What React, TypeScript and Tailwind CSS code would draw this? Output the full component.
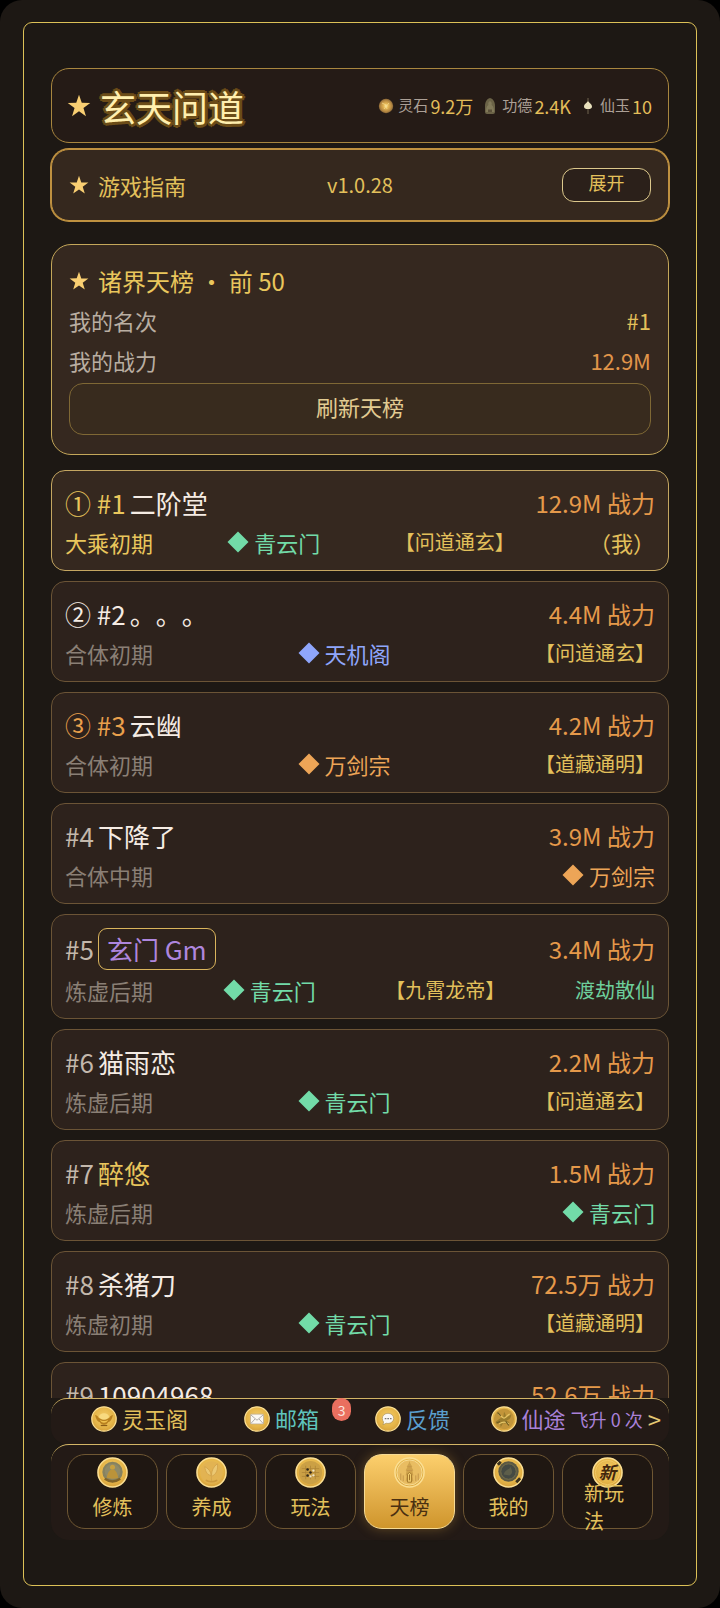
import type { ReactNode } from "react";

type Sect = { name: string; tone: string };
type Player = {
  rank: number;
  badge?: string;
  rankTone: string;
  name: string;
  nameTone: string;
  framed?: boolean;
  power: string;
  realm: string;
  sect: Sect;
  title?: string;
  extra?: string;
  mine?: boolean;
};

const QINGYUN: Sect = { name: "青云门", tone: "text-[#72dba8]" };
const TIANJI: Sect = { name: "天机阁", tone: "text-[#8fa6fb]" };
const WANJIAN: Sect = { name: "万剑宗", tone: "text-[#eda557]" };

const GOLD = "text-[#e9c65c]";
const PALE = "text-[#f5ece4]";
const GREY = "text-[#c3b8ac]";

const players: Player[] = [
  { rank: 1, badge: "①", rankTone: GOLD, name: "二阶堂", nameTone: PALE, power: "12.9M", realm: "大乘初期", sect: QINGYUN, title: "【问道通玄】", extra: "（我）", mine: true },
  { rank: 2, badge: "②", rankTone: PALE, name: "。。。", nameTone: PALE, power: "4.4M", realm: "合体初期", sect: TIANJI, title: "【问道通玄】" },
  { rank: 3, badge: "③", rankTone: "text-[#e9a04c]", name: "云幽", nameTone: PALE, power: "4.2M", realm: "合体初期", sect: WANJIAN, title: "【道藏通明】" },
  { rank: 4, rankTone: GREY, name: "下降了", nameTone: PALE, power: "3.9M", realm: "合体中期", sect: WANJIAN },
  { rank: 5, rankTone: GREY, name: "玄门 Gm", nameTone: "text-[#ae86de]", framed: true, power: "3.4M", realm: "炼虚后期", sect: QINGYUN, title: "【九霄龙帝】", extra: "渡劫散仙" },
  { rank: 6, rankTone: GREY, name: "猫雨恋", nameTone: PALE, power: "2.2M", realm: "炼虚后期", sect: QINGYUN, title: "【问道通玄】" },
  { rank: 7, rankTone: GREY, name: "醉悠", nameTone: GOLD, power: "1.5M", realm: "炼虚后期", sect: QINGYUN },
  { rank: 8, rankTone: GREY, name: "杀猪刀", nameTone: PALE, power: "72.5万", realm: "炼虚初期", sect: QINGYUN, title: "【道藏通明】" },
  { rank: 9, rankTone: GREY, name: "10904968", nameTone: PALE, power: "52.6万", realm: "炼虚初期", sect: QINGYUN },
];

function Star({ className }: { className: string }) {
  return (
    <svg viewBox="0 0 24 24" className={className} aria-hidden="true">
      <path d="M12 .8l2.75 8.05 8.5.1-6.8 5.1 2.5 8.15L12 17.3l-6.95 4.9 2.5-8.15-6.8-5.1 8.5-.1z" fill="#f9cf72" />
    </svg>
  );
}

function Diamond() {
  return (
    <svg viewBox="0 0 22 22" className="size-[22px] shrink-0" aria-hidden="true">
      <path d="M11 .5L21.5 11 11 21.5.5 11z" fill="currentColor" />
    </svg>
  );
}

function Defs() {
  return (
    <svg className="absolute size-0" aria-hidden="true">
      <defs>
        <radialGradient id="coin" cx="50%" cy="42%" r="58%">
          <stop offset="0" stopColor="#f3cc69" />
          <stop offset="0.7" stopColor="#e5b548" />
          <stop offset="1" stopColor="#d6a03a" />
        </radialGradient>
        <radialGradient id="stone" cx="50%" cy="50%" r="50%">
          <stop offset="0" stopColor="#fff0b0" />
          <stop offset="0.3" stopColor="#e8b955" />
          <stop offset="0.75" stopColor="#b88a42" />
          <stop offset="1" stopColor="#8a6738" />
        </radialGradient>
      </defs>
    </svg>
  );
}

function Coin({ className, children }: { className: string; children: ReactNode }) {
  return (
    <svg viewBox="0 0 32 32" className={className} aria-hidden="true">
      <circle cx="16" cy="16" r="15" fill="url(#coin)" stroke="#fbdf93" strokeWidth="1.6" />
      {children}
    </svg>
  );
}

const ingot = (
  <>
    <path d="M5 11c3 0 4 3 5 4h12c1-1 2-4 5-4-1 5-3 8-6 9-1 4-9 4-10 0-3-1-5-4-6-9z" fill="#b8801f" />
    <ellipse cx="16" cy="13" rx="6" ry="4" fill="#f8da80" />
    <path d="M11 17c2 2 8 2 10 0-1 5-9 5-10 0z" fill="#efc04c" />
    <path d="M12 24h8" stroke="#8a5c18" strokeWidth="1.5" />
  </>
);

const envelope = (
  <>
    <rect x="8" y="10" width="16" height="12" rx="1" fill="#fbf8f2" stroke="#b3a694" strokeWidth=".8" />
    <path d="M8.500 11l7.500 6.500L23.500 11M8.500 21.500l5-5.500M23.500 21.500l-5-5.500" fill="none" stroke="#9d9a98" strokeWidth="1" />
  </>
);

const bubble = (
  <>
    <path d="M16 9c4 0 7 2.700 7 6.200s-3 6.300-7 6.300l-2.200-.3-4 2 .8-3.500C9.600 18.600 9 17 9 15.200 9 11.700 12 9 16 9z" fill="#faf8f4" stroke="#a98c51" strokeWidth=".8" />
    <path d="M12 15.500h2M15.200 15.500h2M18.400 15.500h2" stroke="#777" strokeWidth="1.4" />
  </>
);

const crane = (
  <>
    <circle cx="16" cy="16" r="12.500" fill="#c2953a" />
    <path d="M6 19c4-2 6-6 9-4l1-8c2 3 3 5 2 8l7-5c0 5-3 7-6 8l4 2c-3 2-6 2-8 1l-3 5-1-5c-2 1-4 1-5 0z" fill="#9a7c2c" />
    <path d="M9 10c3 1 4 4 7 5 3-1 4-4 7-5M10 22c4-3 8-3 12 0" stroke="#e5c566" strokeWidth="1.400" fill="none" />
    <path d="M8 8l4 4M22 24l-4-5M7 21l4-2" stroke="#6d5b22" strokeWidth="1.400" />
  </>
);

const meditate = (
  <>
    <circle cx="16" cy="15.500" r="10.500" fill="#87825f" />
    <circle cx="16" cy="15" r="8" fill="#8f8a68" />
    <circle cx="16" cy="10.500" r="2.600" fill="#c7a040" />
    <path d="M16 13c4 0 5 5 6 8 1 2-12 2-12 0 1-3 2-8 6-8z" fill="#bb933a" />
    <path d="M8 22.500c5 3.500 11 3.500 16 0" stroke="#806328" strokeWidth="2.400" fill="none" />
  </>
);

const sprout = (
  <>
    <circle cx="16" cy="16" r="11.500" fill="#e2b352" />
    <path d="M16 25c0-8-1-12-7-15 1 6 3 9 7 9 0-5 2-9 6-12 1 6-1 11-6 13" fill="#ebc873" stroke="#d0a048" strokeWidth=".8" />
    <path d="M10 24c4 2 8 2 12 0" stroke="#cc9a3c" strokeWidth="1.500" fill="none" />
  </>
);

const board = (
  <>
    <circle cx="16" cy="16" r="12" fill="#cba045" />
    <path d="M7 12h18M7 16h18M7 20h18M11 9v14M16 9v14M21 9v14" stroke="#ad8436" strokeWidth=".8" />
    <circle cx="13" cy="13" r="1.300" fill="#302719" />
    <circle cx="16" cy="16" r="1.300" fill="#302719" />
    <circle cx="13" cy="19" r="1.300" fill="#302719" />
    <circle cx="19" cy="14" r="1.200" fill="#f0e6c8" />
    <circle cx="19" cy="19" r="1.200" fill="#f0e6c8" />
    <circle cx="16" cy="20" r="1.200" fill="#f0e6c8" />
  </>
);

const pagoda = (
  <>
    <circle cx="16" cy="16" r="13" fill="#e9bd62" stroke="#f8dd95" />
    <path d="M16 4l1 3 2 3h-1l2 4h-1l1 5h-1l1 6h-8l1-6h-1l1-5h-1l2-4h-1l2-3z" fill="#cfa34b" />
    <path d="M14 10h4M13 14h6M13 18h6M7 17v7M9.500 19v6M22.500 19v6M25 17v7" stroke="#c4964a" strokeWidth="1" />
    <path d="M14 18q2-4 4 0v8h-4z" fill="#f4cf70" stroke="#9d7026" strokeWidth=".9" />
    <path d="M16 18v6" stroke="#9d7026" />
  </>
);

const mirror = (
  <>
    <circle cx="16" cy="15" r="10.500" fill="#5b5843" />
    <circle cx="16" cy="15" r="8" fill="#454a43" stroke="#77704a" />
    <path d="M11 18c2-6 6-4 7-8 2 4 3 7-1 9z" fill="#5d5e4a" />
    <path d="M5 8l3-3M24 26l4-4" stroke="#3b321f" strokeWidth="3" />
  </>
);

const fresh = (
  <>
    <circle cx="16" cy="16" r="12.500" fill="none" stroke="#f2c968" />
    <text x="16" y="22.500" textAnchor="middle" fontSize="18" fontWeight="700" fontStyle="italic" fill="#43270d">新</text>
  </>
);

function Stat({ icon, label, value }: { icon: ReactNode; label: string; value: string }) {
  return (
    <div className="flex items-center">
      {icon}
      <span className="ml-1 text-[15px] text-[#aca096]">{label}</span>
      <span className="ml-[2px] text-lg text-[#e3bd59]">{value}</span>
    </div>
  );
}

function PlayerCard({ p }: { p: Player }) {
  return (
    <li
      className={`rounded-[14px] border px-[13px] py-3 ${
        p.mine ? "border-[#c4a661] bg-[#35281f]" : "border-[#6b5436] bg-[#2d221c]"
      }`}
    >
      <div className="flex min-h-10 items-center justify-between text-2xl">
        <div className={`flex items-center gap-1 text-[26px] leading-10 ${p.rankTone}`}>
          <span>
            {p.badge ? `${p.badge} ` : ""}#{p.rank}
          </span>
          {p.framed ? (
            <span className={`my-px rounded-[9px] border border-[#d9b45c] px-2 ${p.nameTone}`}>{p.name}</span>
          ) : (
            <span className={p.nameTone}>{p.name}</span>
          )}
        </div>
        <span className="text-[#e5994a]">{p.power} 战力</span>
      </div>
      <div className="mt-1 flex items-center justify-between pb-px text-[22px] leading-[30px]">
        <span className={p.mine ? GOLD : "text-[#8a7f75]"}>{p.realm}</span>
        <span className={`flex items-center gap-[5px] ${p.sect.tone}`}>
          <Diamond />
          {p.sect.name}
        </span>
        {p.title && <span className="text-xl leading-[30px] text-[#e3c05b]">{p.title}</span>}
        {p.extra && (
          <span className={p.mine ? "text-[#e3c05b]" : "text-xl leading-[30px] text-[#6dcf9c]"}>{p.extra}</span>
        )}
      </div>
    </li>
  );
}

const tabs = [
  { label: "修炼", art: meditate },
  { label: "养成", art: sprout },
  { label: "玩法", art: board },
  { label: "天榜", art: pagoda, active: true },
  { label: "我的", art: mirror },
  { label: "新玩法", art: fresh },
];

export default function App() {
  return (
    <div className="h-screen bg-black font-['Noto_Sans_CJK_SC',sans-serif] [text-spacing-trim:space-all]">
      <Defs />
      <div className="h-full rounded-[22px] bg-[#1d1814] px-[23px] py-[22px]">
        <div className="flex h-full flex-col rounded-[9px] border border-[#dcc057] px-[27px] py-[45px]">
          <header className="flex h-[75px] shrink-0 items-center justify-between rounded-[18px] border border-[#a8863f] bg-[#251b16] pr-4 pl-[15px]">
            <h1 className="flex items-center gap-[9px] text-4xl text-[#ffefae] [text-shadow:3px_0_0_#6b4c18,-3px_0_0_#6b4c18,0_3px_0_#6b4c18,0_-3px_0_#6b4c18,2px_2px_0_#6b4c18,-2px_-2px_0_#6b4c18,2px_-2px_0_#6b4c18,-2px_2px_0_#6b4c18]">
              <Star className="size-6" />
              玄天问道
            </h1>
            <div className="flex items-center gap-[9px]">
              <Stat
                label="灵石"
                value="9.2万"
                icon={
                  <svg viewBox="0 0 16 16" className="size-4" aria-hidden="true">
                    <circle cx="8" cy="8" r="7.200" fill="url(#stone)" />
                    <path d="M4 5l4 2 1 4M6 11l5-6" stroke="#f5d98b" strokeWidth=".8" fill="none" />
                  </svg>
                }
              />
              <Stat
                label="功德"
                value="2.4K"
                icon={
                  <svg viewBox="0 0 16 16" className="size-4" aria-hidden="true">
                    <path d="M8 0c3.500 1 5 4 5 8v6q0 2-2 2H5q-2 0-2-2V8c0-4 1.500-7 5-8z" fill="#6b6347" />
                    <path d="M8 3c2 1 2 3 1.500 4 2 1 2.500 4 2.500 7H4c0-3 .5-6 2.500-7C6 6 6 4 8 3z" fill="#827a5a" />
                    <path d="M6 11.500h4V14H6z" fill="#5a5039" />
                  </svg>
                }
              />
              <Stat
                label="仙玉"
                value="10"
                icon={
                  <svg viewBox="0 0 16 16" className="size-4" aria-hidden="true">
                    <path d="M8 0v16" stroke="#70654e" strokeWidth="1" />
                    <path d="M8 3c1 2 4 3 4 5.500C12 10.500 10.500 11 8 11s-4-.5-4-2.500C4 6 7 5 8 3z" fill="#e9e1bd" />
                  </svg>
                }
              />
            </div>
          </header>

          <section className="mt-[6px] grid h-[72px] shrink-0 grid-cols-3 items-center rounded-[18px] border border-[#bf9140] bg-[#35281e] px-[17px] text-[22px] text-[#e3c05b] ring-1 ring-[#bf9140]">
            <h2 className="flex items-center gap-[9px]">
              <Star className="size-5" />
              游戏指南
            </h2>
            <span className="justify-self-center text-xl">v1.0.28</span>
            <button className="h-[34px] w-[89px] justify-self-end rounded-[12px] border border-[#dcc88c] bg-[#2b201a] pb-[6px] text-lg leading-6">
              展开
            </button>
          </section>

          <main className="mt-[23px] min-h-0 flex-1 overflow-y-auto [scrollbar-width:none]">
            <section className="rounded-[20px] border border-[#c4a75a] bg-[#35281f] px-[17px] pt-[17px] pb-[19px] text-[22px]">
              <h2 className="flex items-center gap-[9px] text-2xl leading-[38px] text-[#e9c65c]">
                <Star className="size-5" />
                诸界天榜 ・ 前 50
              </h2>
              <dl className="text-[#b9aea2]">
                <div className="flex justify-between leading-10">
                  <dt>我的名次</dt>
                  <dd className="text-[#e3c05b]">#1</dd>
                </div>
                <div className="flex justify-between leading-10">
                  <dt>我的战力</dt>
                  <dd className="text-[#e0954a]">12.9M</dd>
                </div>
              </dl>
              <button className="mt-[3px] h-[52px] w-full rounded-[14px] border border-[#7f6835] bg-[#382b1e] pb-[6px] text-[#e2cb92]">
                刷新天榜
              </button>
            </section>
            <ol className="mt-[15px] flex flex-col gap-[10px]">
              {players.map((p) => (
                <PlayerCard key={p.rank} p={p} />
              ))}
            </ol>
          </main>

          <div className="flex h-[46px] shrink-0 items-center rounded-[16px] border-t border-[#d3b566] bg-[#231a16] pr-2 pb-[6px] pl-[40px] text-[22px]">
            <div className="flex gap-14">
              <button className="flex items-center gap-[5px] text-[#e3c05b]">
                <Coin className="size-[26px]">{ingot}</Coin>
                灵玉阁
              </button>
              <button className="relative flex items-center gap-[5px] text-[#5fc4bd]">
                <Coin className="size-[26px]">{envelope}</Coin>
                邮箱
                <span className="absolute -top-1 -right-8 flex h-[23px] w-[19px] items-center justify-center rounded-full bg-[#ea6f5f] text-sm text-[#fbe5df]">
                  3
                </span>
              </button>
              <button className="flex items-center gap-[5px] text-[#5a9fce]">
                <Coin className="size-[26px]">{bubble}</Coin>
                反馈
              </button>
            </div>
            <button className="ml-auto flex items-center gap-[5px] text-[#a981d8]">
              <Coin className="size-[26px]">{crane}</Coin>
              仙途
              <span className="text-lg">飞升 0 次</span>
              <span className="text-2xl leading-8 text-[#e3c874]">&gt;</span>
            </button>
          </div>

          <nav className="grid shrink-0 grid-cols-6 gap-2 rounded-[18px] border-t border-[#d3b566] bg-[#231a16] px-4 pt-[9px] pb-[11px]">
            {tabs.map((t) => (
              <button
                key={t.label}
                aria-current={t.active ? "page" : undefined}
                className={`flex h-[75px] flex-col items-center rounded-[18px] border px-[21px] py-[2px] text-xl leading-7 ${
                  t.active
                    ? "border-[#f7db94] bg-linear-to-b from-[#fccf6c] to-[#cf952b] text-[#4a3011] shadow-[0_0_12px_rgba(214,160,60,0.35)]"
                    : "border-[#6f5733] bg-[#1f1712] text-[#e3c05b]"
                }`}
              >
                <Coin className="size-[31px] shrink-0">{t.art}</Coin>
                <span className="flex min-h-0 flex-1 items-center text-left">{t.label}</span>
              </button>
            ))}
          </nav>
        </div>
      </div>
    </div>
  );
}
